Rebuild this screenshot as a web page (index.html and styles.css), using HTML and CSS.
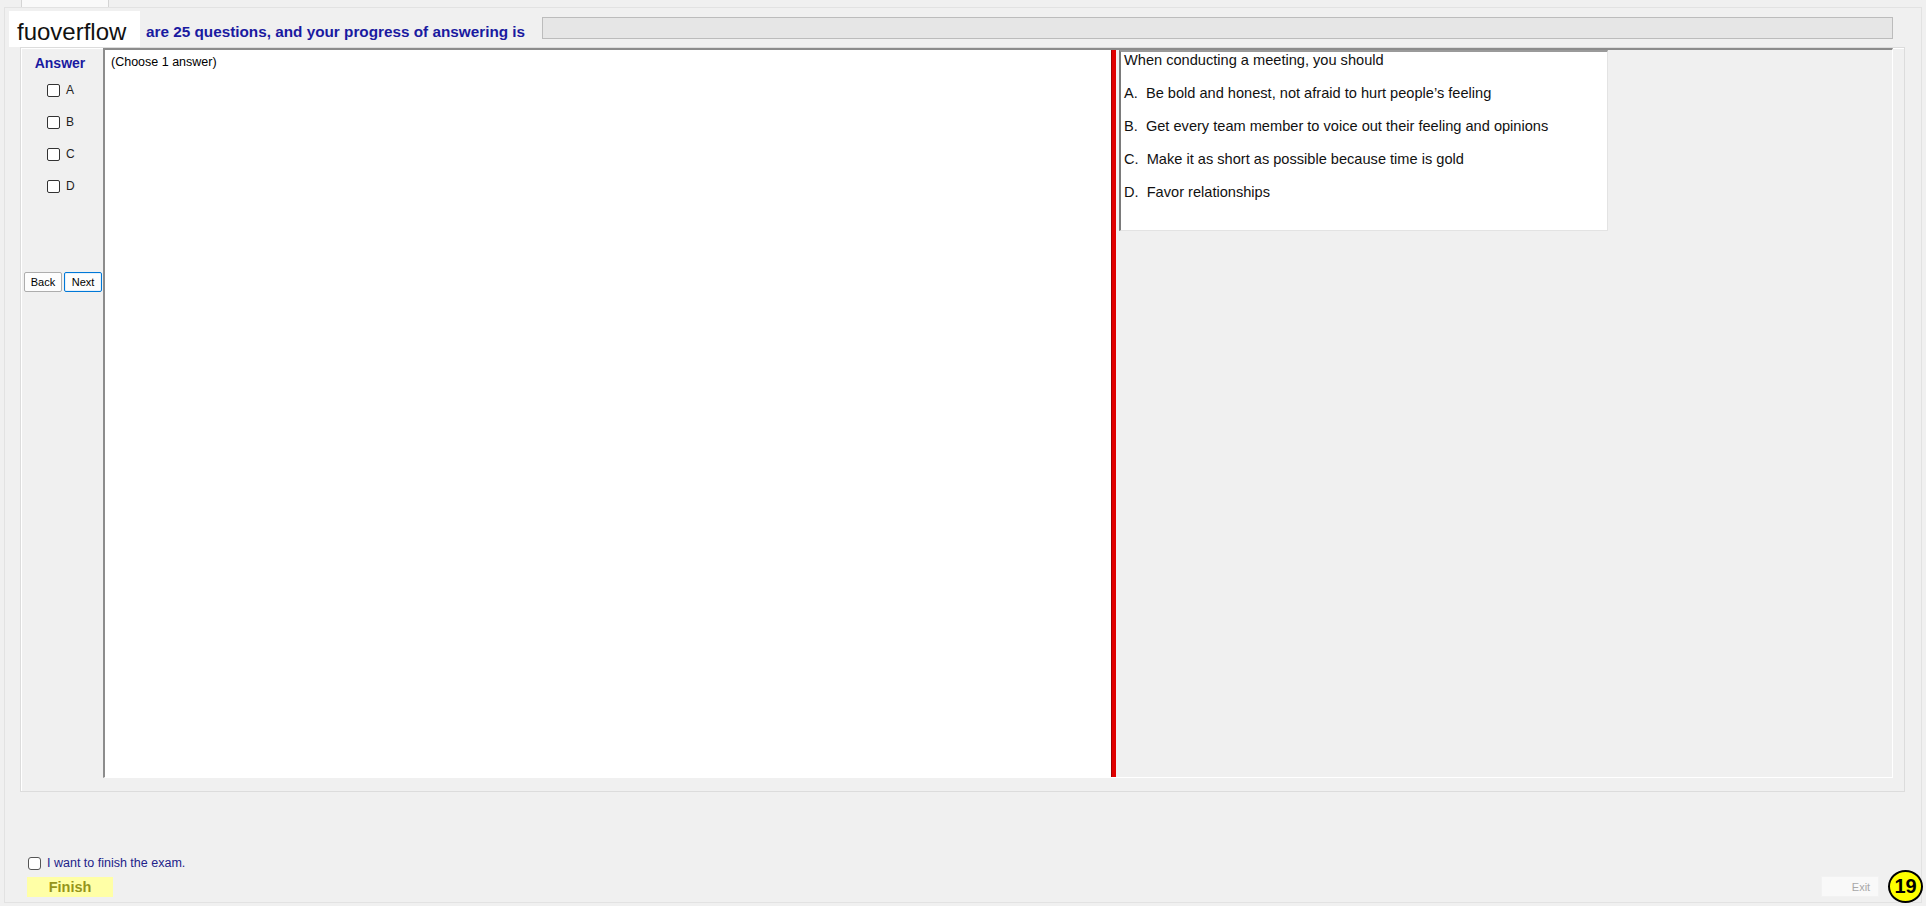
FILE: index.html
```html
<!DOCTYPE html>
<html lang="en">
<head>
  <meta charset="UTF-8" />
  <meta name="viewport" content="width=device-width, initial-scale=1.0"/>
  <title>Exam</title>
  <link rel="stylesheet" href="styles.css">
</head>
<body>

  <!-- Tab strip (only the bottom edge is visible) -->
  <div class="tabs"><div class="tab"></div></div>

  <div class="page">

    <!-- Header: watermark, counter text, progress -->
    <header class="header">
      <div class="logo">fuoverflow</div>
      <div class="title">are 25 questions, and your progress of answering is</div>
      <div class="progress"></div>
    </header>

    <!-- Main group -->
    <div class="group">
      <div class="answers">
        <div class="answers-title">Answer</div>
        <label class="opt"><input type="checkbox" /><span>A</span></label>
        <label class="opt"><input type="checkbox" /><span>B</span></label>
        <label class="opt"><input type="checkbox" /><span>C</span></label>
        <label class="opt"><input type="checkbox" /><span>D</span></label>
        <div class="nav">
          <button class="btn">Back</button>
          <button class="btn btn-default">Next</button>
        </div>
      </div>

      <div class="split">
        <div class="pane-left">(Choose 1 answer)</div>
        <div class="splitter"></div>
        <div class="pane-right">
          <div class="question">
            <p>When conducting a meeting, you should</p>
            <p>A.&nbsp; Be bold and honest, not afraid to hurt people’s feeling</p>
            <p>B.&nbsp; Get every team member to voice out their feeling and opinions</p>
            <p>C.&nbsp; Make it as short as possible because time is gold</p>
            <p>D.&nbsp; Favor relationships</p>
          </div>
        </div>
      </div>
    </div>

    <!-- Footer -->
    <footer class="footer">
      <div class="finish-area">
        <label class="finish-check"><input type="checkbox" /><span>I want to finish the exam.</span></label>
        <button class="finish-btn">Finish</button>
      </div>
      <button class="exit-btn" disabled>Exit</button>
    </footer>
  </div>

  <div class="badge">19</div>

</body>
</html>
```

FILE: styles.css
```css
/* Reset and base styling */
* {
  margin: 0;
  padding: 0;
  box-sizing: border-box;
  font-family: 'Liberation Sans', Arial, sans-serif;
}

body {
  width: 1926px;
  height: 906px;
  background: #f0f0f0;
  color: #000;
  overflow: hidden;
  position: relative;
}

/* Tab strip */
.tabs {
  height: 7px;
}

.tab {
  margin-left: 21px;
  width: 88px;
  height: 7px;
  background: #f9f9f9;
  border: 1px solid #d4d4d4;
  border-top: none;
  border-bottom: none;
}

/* Tab page */
.page {
  margin: 0 4px;
  height: 896px;
  border: 1px solid #e2e2e2;
  background: #f0f0f0;
  display: flex;
  flex-direction: column;
}

/* Header */
.header {
  height: 39px;
  display: flex;
  align-items: flex-start;
}

.logo {
  margin: 3px 0 0 4px;
  width: 131px;
  height: 36px;
  background: #fff;
  padding: 5px 0 0 8px;
  font-size: 24px;
  line-height: 31px;
  color: #111;
}

.title {
  margin: 15px 0 0 6px;
  font-size: 15.3px;
  line-height: 18px;
  font-weight: bold;
  color: #1a1aa0;
  white-space: nowrap;
}

.progress {
  margin: 9px 28px 0 auto;
  width: 1351px;
  height: 22px;
  background: #e6e6e6;
  border: 1px solid #bcbcbc;
}

/* Group box */
.group {
  margin-left: 15px;
  width: 1885px;
  height: 745px;
  border: 1px solid #dcdcdc;
  box-shadow: inset 1px 1px 0 #fff;
  display: flex;
  align-items: flex-start;
}

/* Answer column */
.answers {
  width: 82px;
  flex-shrink: 0;
  padding-top: 7px;
}

.answers-title {
  text-align: center;
  padding-right: 4px;
  font-size: 14px;
  line-height: 16px;
  font-weight: bold;
  color: #1a1aa0;
  margin-bottom: 3px;
}

.opt {
  height: 32px;
  display: flex;
  align-items: center;
  padding-left: 26px;
  font-size: 12px;
  color: #222;
}

.opt span {
  margin-left: 6px;
}

input[type="checkbox"] {
  appearance: none;
  -webkit-appearance: none;
  width: 13px;
  height: 13px;
  background: #fff;
  border: 1px solid #333;
  border-radius: 2px;
  flex-shrink: 0;
}

.nav {
  margin-top: 70px;
  padding-left: 3px;
  display: flex;
  gap: 2px;
}

.btn {
  width: 38px;
  height: 20px;
  background: #fdfdfd;
  border: 1px solid #adadad;
  border-radius: 2px;
  font-size: 11px;
  color: #000;
}

.btn-default {
  border-color: #0078d7;
  box-shadow: inset 0 0 0 1px #e5f1fb;
}

/* Split container */
.split {
  width: 1790px;
  height: 730px;
  display: flex;
  border-top: 2px solid #8c8c8c;
  border-left: 2px solid #8c8c8c;
  border-right: 1px solid #fff;
  border-bottom: 1px solid #fff;
}

.pane-left {
  width: 1006px;
  background: #fff;
  padding: 4px 0 0 6px;
  font-size: 12.5px;
  line-height: 16px;
  color: #000;
}

.splitter {
  width: 5px;
  background: #e00000;
  border-left: 1px solid #a00000;
}

.pane-right {
  flex: 1;
  padding-left: 3px;
  background: #f0f0f0;
}

.question {
  width: 489px;
  height: 181px;
  background: #fff;
  border-top: 2px solid #9a9a9a;
  border-left: 2px solid #7a7a7a;
  border-right: 1px solid #e3e3e3;
  border-bottom: 1px solid #e3e3e3;
  padding: 0 0 0 3px;
}

.question p {
  font-size: 14.6px;
  line-height: 17px;
  margin-bottom: 16px;
  color: #111;
  white-space: nowrap;
}

/* Footer */
.footer {
  margin-top: 64px;
  padding-left: 22px;
  display: flex;
  justify-content: space-between;
  align-items: flex-end;
}

.finish-area {
  display: flex;
  flex-direction: column;
  align-items: flex-start;
}

.finish-check {
  height: 14px;
  margin-left: 1px;
  display: flex;
  align-items: center;
  font-size: 12.5px;
  color: #22228a;
}

.finish-check input {
  border-color: #555;
  border-radius: 3px;
}

.finish-check span {
  margin-left: 6px;
}

.finish-btn {
  margin-top: 7px;
  width: 86px;
  height: 20px;
  background: #ffffa6;
  border: none;
  font-size: 14.5px;
  font-weight: bold;
  color: #95951a;
}

.exit-btn {
  margin-right: 42px;
  width: 58px;
  height: 21px;
  padding-left: 22px;
  background: #f9f9f9;
  border: 1px solid #f2f2f2;
  font-size: 11px;
  color: #a8a8a8;
}

/* Counter badge */
.badge {
  position: absolute;
  left: 1888px;
  top: 870px;
  width: 35px;
  height: 33px;
  border: 2px solid #000;
  border-radius: 50%;
  background: #ffff00;
  font-size: 20px;
  font-weight: bold;
  line-height: 29px;
  text-align: center;
  color: #000;
}
```
